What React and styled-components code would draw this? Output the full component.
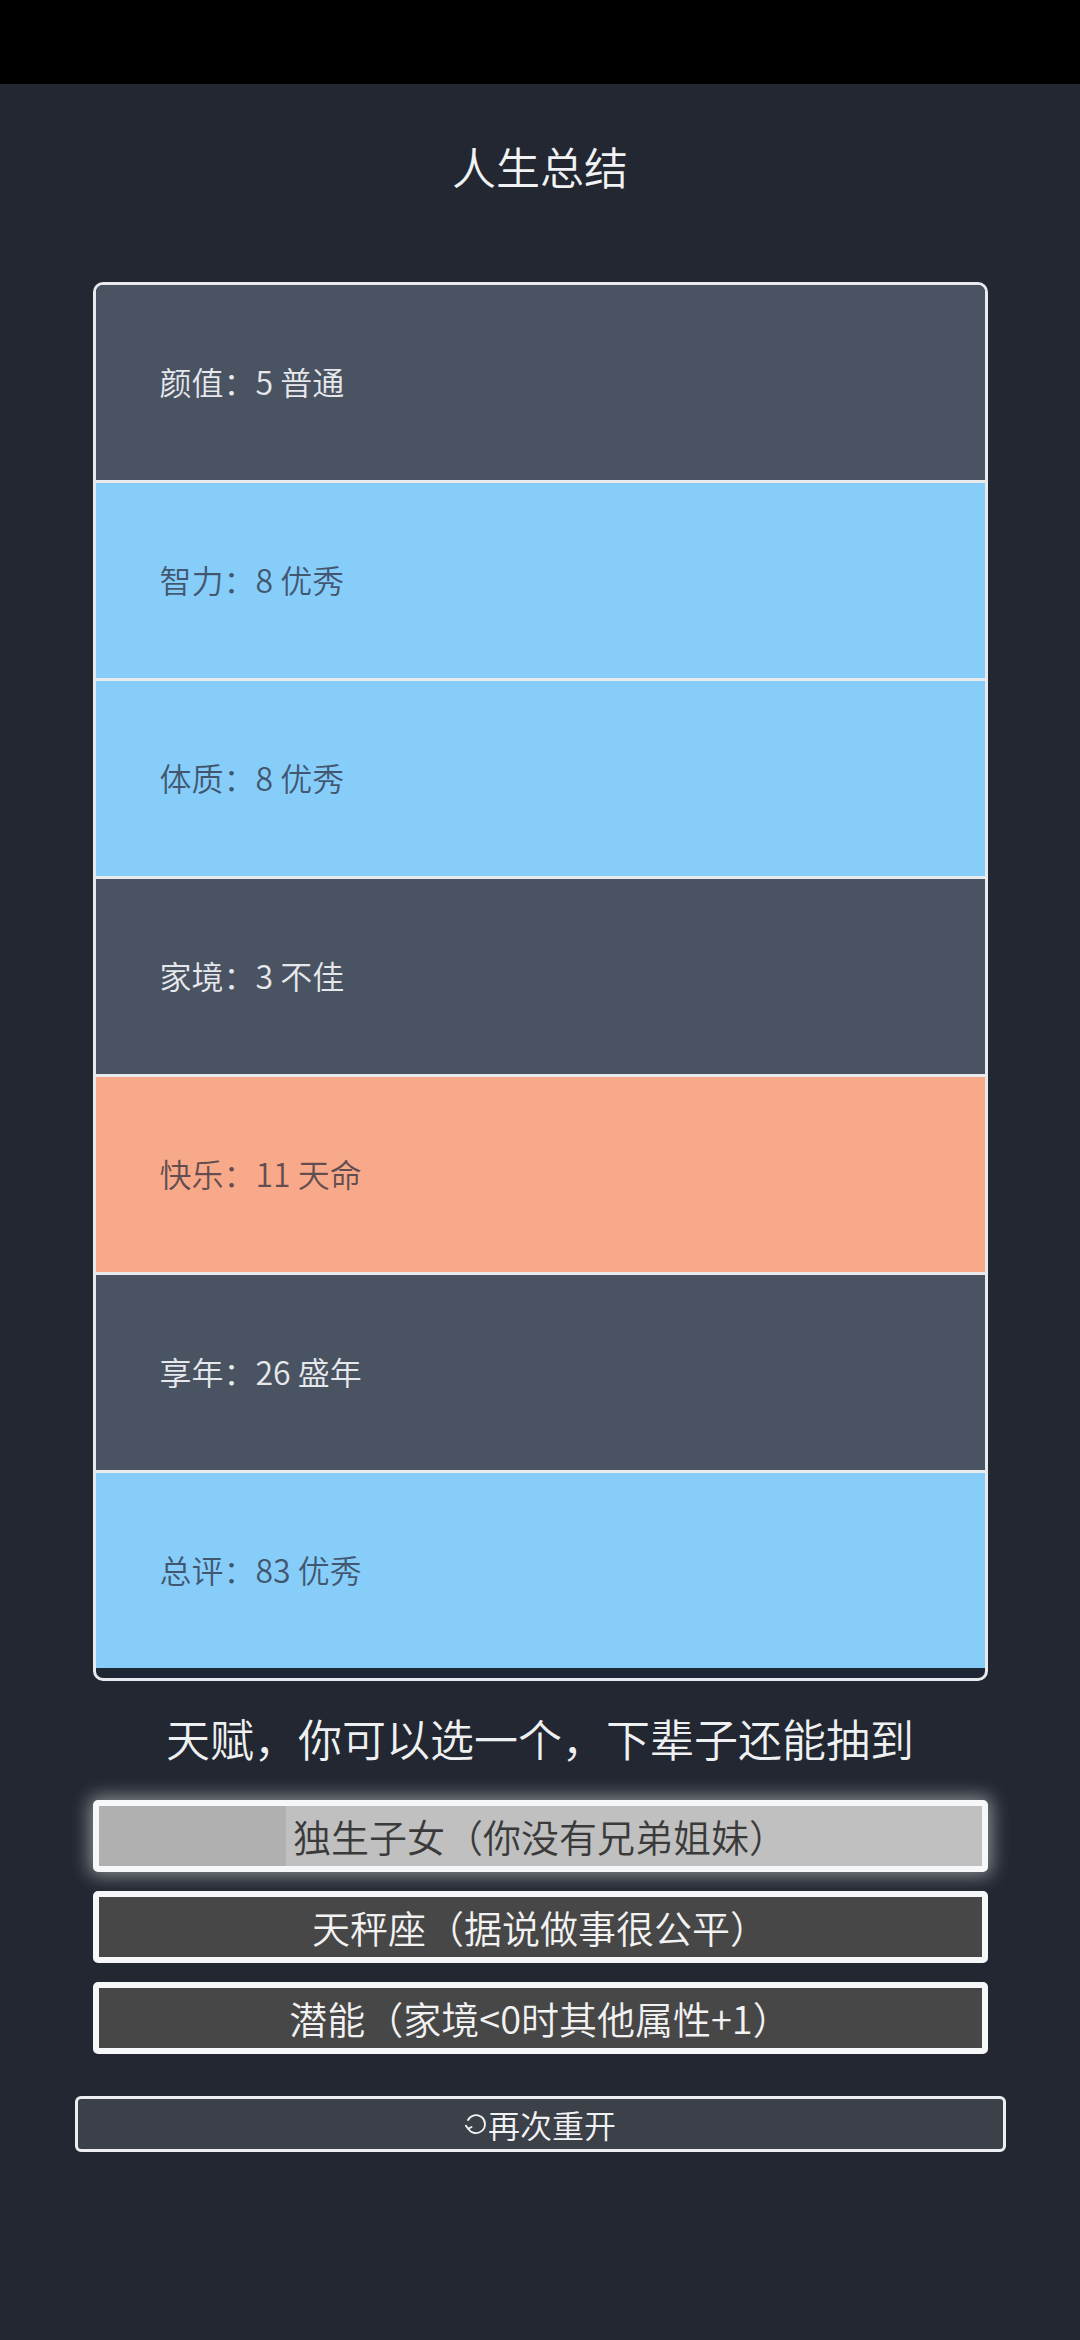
import React from "react";
import styled, { createGlobalStyle } from "styled-components";

const Global = createGlobalStyle`
  html, body { margin: 0; padding: 0; background: #222731; }
  body { font-family: "Noto Sans CJK SC", "Noto Sans", sans-serif; font-weight: 350; }
  #root { min-height: 100vh; background: #222731; }
`;

const Page = styled.div`
  min-height: 2340px;
  display: flex;
  flex-direction: column;
  align-items: center;
  background: #222731;
`;

const StatusBar = styled.div`
  width: 100%;
  height: 84px;
  background: #000;
  flex-shrink: 0;
`;

const Title = styled.h1`
  margin: 49px 0 0;
  font-size: 44px;
  line-height: 66px;
  font-weight: 350;
  color: #f1f2f4;
`;

const Card = styled.ul`
  list-style: none;
  margin: 83px 0 0;
  padding: 0;
  width: 895px;
  height: 1399px;
  box-sizing: border-box;
  border: 3px solid #e8eaee;
  border-radius: 10px;
  background: #1e2733;
  overflow: hidden;
  display: flex;
  flex-direction: column;
`;

const palette = {
  normal: { bg: "#4a5362", fg: "#e6e8ec" },
  good: { bg: "#87cdf9", fg: "rgba(40, 42, 58, 0.72)" },
  great: { bg: "#f8a98a", fg: "rgba(40, 42, 58, 0.72)" },
};

const Row = styled.li`
  height: 195px;
  flex-shrink: 0;
  display: flex;
  align-items: center;
  padding-left: 64px;
  padding-bottom: 4px;
  box-sizing: border-box;
  font-size: 32px;
  background: ${(p) => palette[p.$tone].bg};
  color: ${(p) => palette[p.$tone].fg};
  & + & { border-top: 3px solid #e8eaee; height: 198px; }
`;

const Heading = styled.h2`
  margin: 24px 0 0;
  font-size: 44px;
  line-height: 66px;
  font-weight: 350;
  color: #eef0f2;
`;

const Choices = styled.div`
  margin-top: 29px;
  display: flex;
  flex-direction: column;
  gap: 19px;
`;

const Choice = styled.button`
  position: relative;
  width: 895px;
  height: 72px;
  box-sizing: border-box;
  border: 6px solid #f6f7f8;
  border-radius: 5px;
  background: ${(p) => (p.$selected ? "#c0c0c0" : "#474747")};
  color: ${(p) => (p.$selected ? "#3a3a3a" : "#f2f2f2")};
  box-shadow: ${(p) => (p.$selected ? "0 0 18px 4px rgba(255,255,255,0.45)" : "none")};
  font-family: inherit;
  font-weight: 350;
  font-size: 38px;
  line-height: 58px;
  padding: 0;
  overflow: hidden;
  cursor: pointer;
`;

const Fill = styled.span`
  position: absolute;
  left: 0;
  top: 0;
  bottom: 0;
  background: #b0b0b0;
`;

const Label = styled.span`
  position: relative;
`;

const Restart = styled.button`
  margin-top: 42px;
  width: 931px;
  height: 56px;
  box-sizing: border-box;
  border: 3px solid #eceef1;
  border-radius: 6px;
  background: #3c4049;
  color: #f1f2f4;
  font-family: inherit;
  font-weight: 350;
  font-size: 32px;
  display: flex;
  align-items: center;
  justify-content: center;
  gap: 2px;
  cursor: pointer;
`;

const RefreshIcon = () => (
  <svg width="22" height="26" viewBox="0 0 22 26" fill="none" stroke="#f1f2f4" strokeWidth="1.8" strokeLinecap="round" strokeLinejoin="round">
    <path d="M4 9 A9 9 0 1 1 4.2 17.6" />
    <path d="M1.8 14.6 L4.2 17.8 L7.6 16" />
  </svg>
);

const stats = [
  { label: "颜值", value: "5 普通", tone: "normal" },
  { label: "智力", value: "8 优秀", tone: "good" },
  { label: "体质", value: "8 优秀", tone: "good" },
  { label: "家境", value: "3 不佳", tone: "normal" },
  { label: "快乐", value: "11 天命", tone: "great" },
  { label: "享年", value: "26 盛年", tone: "normal" },
  { label: "总评", value: "83 优秀", tone: "good" },
];

const talents = [
  { text: "独生子女（你没有兄弟姐妹）", selected: true, fill: 187 },
  { text: "天秤座（据说做事很公平）" },
  { text: "潜能（家境<0时其他属性+1）" },
];

export default function App() {
  return (
    <>
      <Global />
      <Page>
        <StatusBar />
        <Title>人生总结</Title>
        <Card>
          {stats.map((s) => (
            <Row key={s.label} $tone={s.tone}>
              {s.label}：{s.value}
            </Row>
          ))}
        </Card>
        <Heading>天赋，你可以选一个，下辈子还能抽到</Heading>
        <Choices>
          {talents.map((t) => (
            <Choice key={t.text} $selected={t.selected}>
              {t.fill ? <Fill style={{ width: t.fill }} /> : null}
              <Label>{t.text}</Label>
            </Choice>
          ))}
        </Choices>
        <Restart>
          <RefreshIcon />
          再次重开
        </Restart>
      </Page>
    </>
  );
}
